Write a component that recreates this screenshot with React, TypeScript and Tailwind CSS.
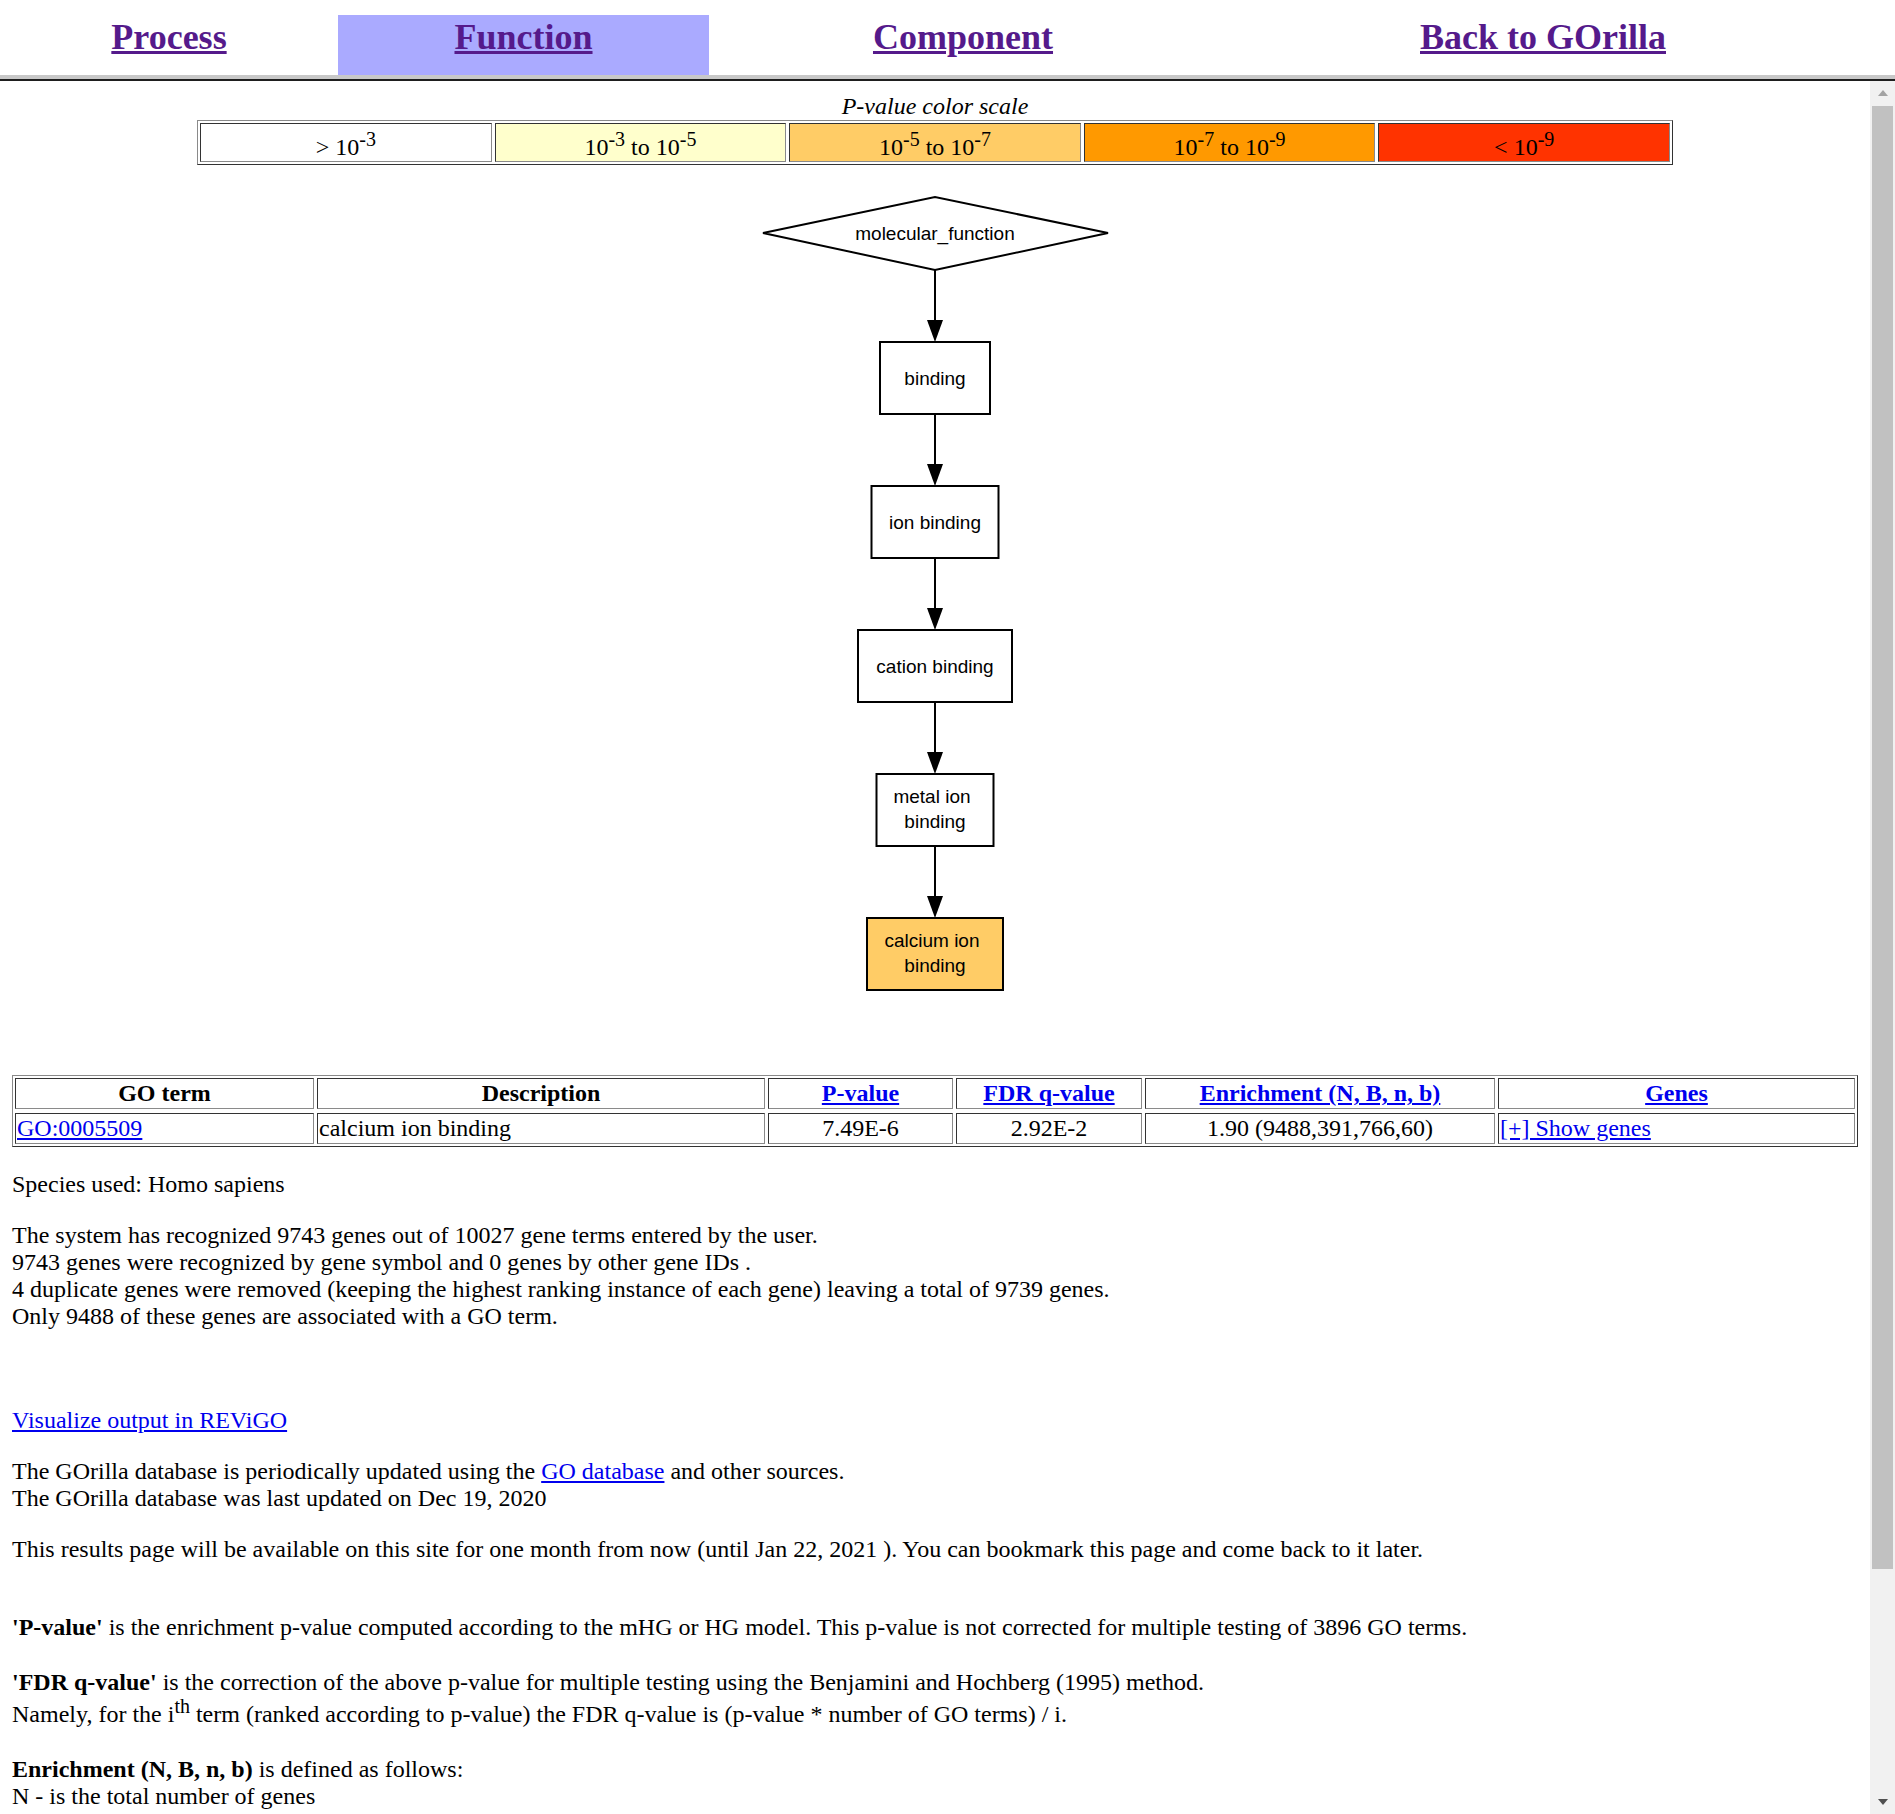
import React from 'react';

const tabs = [
  { label: 'Process', width: 'w-[338px]', active: false },
  { label: 'Function', width: 'w-[371px]', active: true },
  { label: 'Component', width: 'w-[508px]', active: false },
  { label: 'Back to GOrilla', width: 'w-[652px]', active: false },
];

const scale = [
  { bg: 'bg-white', pre: '> ', a: '-3' },
  { bg: 'bg-[#ffffcc]', a: '-3', b: '-5' },
  { bg: 'bg-[#ffcc66]', a: '-5', b: '-7' },
  { bg: 'bg-[#ff9900]', a: '-7', b: '-9' },
  { bg: 'bg-[#ff3300]', pre: '< ', a: '-9' },
];

// graph nodes, svg-local coords (svg is 400 wide, centred on the page)
const nodes = [
  { y: 162, w: 110, lines: ['binding'] },
  { y: 306, w: 127, lines: ['ion binding'] },
  { y: 450, w: 154, lines: ['cation binding'] },
  { y: 594, w: 117, lines: ['metal ion', 'binding'] },
  { y: 738, w: 136, lines: ['calcium ion', 'binding'], fill: '#ffcc66' },
];
const NODE_H = 72;
const CX = 200;

function Sup({ children }: { children: React.ReactNode }) {
  return <sup className="relative top-0 align-super text-[20px] leading-normal">{children}</sup>;
}

function Arrow({ from, to }: { from: number; to: number }) {
  return (
    <g>
      <line x1={CX} y1={from} x2={CX} y2={to - 21} stroke="#000" strokeWidth={2} />
      <polygon points={`${CX - 8},${to - 22} ${CX + 8},${to - 22} ${CX},${to}`} fill="#000" />
    </g>
  );
}

function GoGraph() {
  return (
    <svg width={400} height={830} viewBox="0 0 400 830" className="mx-auto mt-[15px] block">
      <polygon points="28,53 200,17 373,53 200,90" fill="#fff" stroke="#000" strokeWidth={2} />
      <text x={CX} y={60} textAnchor="middle" fontSize={19} fontFamily="Liberation Sans, Arial, sans-serif">
        molecular_function
      </text>
      {nodes.map((n, i) => {
        const prevBottom = i === 0 ? 90 : nodes[i - 1].y + NODE_H;
        const mid = n.y + NODE_H / 2;
        return (
          <g key={n.lines.join(' ')}>
            <Arrow from={prevBottom} to={n.y} />
            <rect x={CX - n.w / 2} y={n.y} width={n.w} height={NODE_H} fill={n.fill ?? '#fff'} stroke="#000" strokeWidth={2} />
            {n.lines.length === 1 ? (
              <text x={CX} y={mid + 6.5} textAnchor="middle" fontSize={19} fontFamily="Liberation Sans, Arial, sans-serif">
                {n.lines[0]}
              </text>
            ) : (
              <>
                <text x={CX - 3} y={mid - 7} textAnchor="middle" fontSize={19} fontFamily="Liberation Sans, Arial, sans-serif">
                  {n.lines[0]}
                </text>
                <text x={CX} y={mid + 17.5} textAnchor="middle" fontSize={19} fontFamily="Liberation Sans, Arial, sans-serif">
                  {n.lines[1]}
                </text>
              </>
            )}
          </g>
        );
      })}
    </svg>
  );
}

const cell = 'border border-t-[#333] border-l-[#333] border-b-[#8a8a8a] border-r-[#8a8a8a] px-[1px] py-[1px]';
const link = 'text-[#0000ee] underline';

function ResultsTable() {
  return (
    <div className="mt-[65px] grid grid-cols-[299px_448px_185px_186px_350px_1fr] gap-x-[3px] gap-y-[4px] border border-t-[#8a8a8a] border-l-[#8a8a8a] border-b-[#333] border-r-[#333] p-[2px]">
      <div className={`${cell} text-center font-bold`}>GO term</div>
      <div className={`${cell} text-center font-bold`}>Description</div>
      <div className={`${cell} text-center font-bold`}><a className={link}>P-value</a></div>
      <div className={`${cell} text-center font-bold`}><a className={link}>FDR q-value</a></div>
      <div className={`${cell} text-center font-bold`}><a className={link}>Enrichment (N, B, n, b)</a></div>
      <div className={`${cell} text-center font-bold`}><a className={link}>Genes</a></div>

      <div className={cell}><a className={link}>GO:0005509</a></div>
      <div className={cell}>calcium ion binding</div>
      <div className={`${cell} text-center`}>7.49E-6</div>
      <div className={`${cell} text-center`}>2.92E-2</div>
      <div className={`${cell} text-center`}>1.90 (9488,391,766,60)</div>
      <div className={cell}><a className={link}>[+] Show genes</a></div>
    </div>
  );
}

function Scrollbar() {
  return (
    <div className="flex w-[25px] flex-col bg-[#f1f1f1]">
      <div className="flex h-[23px] items-center justify-center">
        <svg width={10} height={6} viewBox="0 0 10 6"><polygon points="0,6 10,6 5,0" fill="#a3a3a3" /></svg>
      </div>
      <div className="mx-[2px] mt-[2px] h-[1463px] bg-[#c1c1c1]" />
      <div className="flex-1" />
      <div className="flex h-[24px] items-center justify-center">
        <svg width={10} height={6} viewBox="0 0 10 6"><polygon points="0,0 10,0 5,6" fill="#505050" /></svg>
      </div>
    </div>
  );
}

export default function App() {
  return (
    <div className="flex h-[1814px] w-[1895px] flex-col overflow-hidden bg-white text-black font-['Liberation_Serif','Times_New_Roman',serif]">
      {/* top frame: section tabs */}
      <div className="flex h-[75px] shrink-0 items-start pt-[15px]">
        {tabs.map((t) => (
          <div
            key={t.label}
            className={`${t.width} h-[60px] pt-[4px] text-center text-[36px] leading-[36px] ${t.active ? 'bg-[#aaaaff]' : ''}`}
          >
            <a className="font-bold text-[#551a8b] underline">{t.label}</a>
          </div>
        ))}
      </div>
      <div className="h-[4px] shrink-0 bg-[#c8c8c8]" />
      <div className="h-[2px] shrink-0 bg-[#1e1e1e]" />

      {/* results frame */}
      <div className="flex min-h-0 flex-1">
        <div className="min-w-0 flex-1 overflow-hidden px-[12px] pt-[12px] text-[24px] leading-[27px]">
          <p className="text-center italic">P-value color scale</p>
          <div className="mx-auto grid w-[1476px] grid-cols-5 gap-[3px] border border-t-[#8a8a8a] border-l-[#8a8a8a] border-b-[#333] border-r-[#333] p-[2px]">
            {scale.map((s) => (
              <div
                key={s.bg}
                className={`${s.bg} flex h-[39px] items-center justify-center border border-t-[#333] border-l-[#333] border-b-[#8a8a8a] border-r-[#8a8a8a]`}
              >
                <span>
                  {s.pre}10<Sup>{s.a}</Sup>
                  {s.b && (
                    <>
                      {' '}to 10<Sup>{s.b}</Sup>
                    </>
                  )}
                </span>
              </div>
            ))}
          </div>

          <GoGraph />

          <ResultsTable />

          <p className="mt-[24px]">Species used: Homo sapiens</p>
          <p className="mt-[24px]">
            The system has recognized 9743 genes out of 10027 gene terms entered by the user.
            <br />
            9743 genes were recognized by gene symbol and 0 genes by other gene IDs .
            <br />
            4 duplicate genes were removed (keeping the highest ranking instance of each gene) leaving a total of 9739 genes.
            <br />
            Only 9488 of these genes are associated with a GO term.
          </p>
          <p className="mt-[77px]">
            <a className={link}>Visualize output in REViGO</a>
          </p>
          <p className="mt-[24px]">
            The GOrilla database is periodically updated using the <a className={link}>GO database</a> and other sources.
            <br />
            The GOrilla database was last updated on Dec 19, 2020
          </p>
          <p className="mt-[24px]">
            This results page will be available on this site for one month from now (until Jan 22, 2021 ). You can bookmark this page and come back to it later.
          </p>
          <p className="mt-[51px]">
            <b>'P-value'</b> is the enrichment p-value computed according to the mHG or HG model. This p-value is not corrected for multiple testing of 3896 GO terms.
          </p>
          <p className="mt-[28px]">
            <b>'FDR q-value'</b> is the correction of the above p-value for multiple testing using the Benjamini and Hochberg (1995) method.
            <br />
            Namely, for the i<sup className="relative top-0 align-super text-[20px] leading-[20px]">th</sup> term (ranked according to p-value) the FDR q-value is (p-value * number of GO terms) / i.
          </p>
          <p className="mt-[28px]">
            <b>Enrichment (N, B, n, b)</b> is defined as follows:
            <br />
            N - is the total number of genes
          </p>
        </div>
        <Scrollbar />
      </div>
    </div>
  );
}
